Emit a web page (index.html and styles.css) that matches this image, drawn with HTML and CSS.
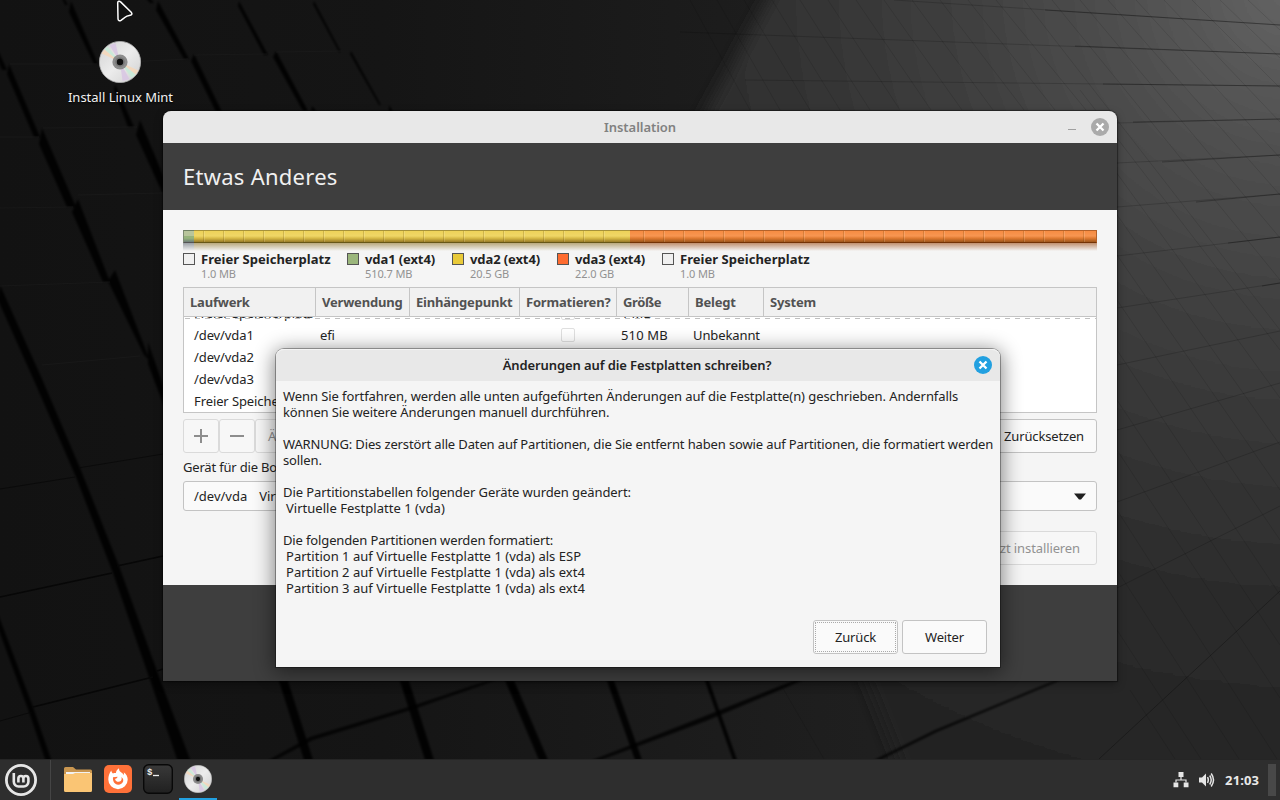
FILE: index.html
```html
<!DOCTYPE html>
<html lang="de">
<head>
<meta charset="utf-8">
<title>Installation</title>
<link rel="stylesheet" href="styles.css">
</head>
<body>
<svg class="defs" width="0" height="0" aria-hidden="true">
  <defs>
    <linearGradient id="discBase" x1="0" y1="0" x2="1" y2="1">
      <stop offset="0" stop-color="#d2d2d2"/><stop offset=".5" stop-color="#ececec"/><stop offset="1" stop-color="#cfcfcf"/>
    </linearGradient>
    <symbol id="disc" viewBox="0 0 42 42">
      <circle cx="21" cy="21" r="20.6" fill="url(#discBase)" stroke="#b5b5b5" stroke-width=".8"/>
      <g opacity=".85">
        <path d="M21 21 2.600 12.500 5.500 8.500z" fill="#f6d8ba"/>
        <path d="M21 21 5.500 8.500 8.500 5.600z" fill="#c8ecd8"/>
        <path d="M21 21 10.500 4.300 16.500 2z" fill="#d9c6e4"/>
        <path d="M21 21 39.400 29.500 36.500 33.500z" fill="#f6d8ba"/>
        <path d="M21 21 36.500 33.500 32.500 37z" fill="#c8ecd8"/>
        <path d="M21 21 30.500 38.300 23.500 40z" fill="#d9c6e4"/>
      </g>
      <circle cx="21" cy="21" r="7.600" fill="#8c8c8c"/>
      <circle cx="21" cy="21" r="4.800" fill="#777"/>
      <circle cx="21" cy="21" r="3.200" fill="#111"/>
    </symbol>
    <symbol id="close" viewBox="0 0 18 18">
      <circle cx="9" cy="9" r="9" fill="currentColor"/>
      <path d="M5.500 5.500l7 7M12.500 5.500l-7 7" stroke="#fff" stroke-width="2.300"/>
    </symbol>
  </defs>
</svg>

<main class="desktop">
  <svg class="wallpaper" viewBox="0 0 1280 800" aria-hidden="true">
    <defs>
      <linearGradient id="base" x1="0" y1="0" x2="1" y2="0">
        <stop offset="0" stop-color="#121212"/><stop offset=".3" stop-color="#151515"/><stop offset=".6" stop-color="#1d1d1d"/><stop offset="1" stop-color="#272727"/>
      </linearGradient>
      <radialGradient id="light" gradientUnits="userSpaceOnUse" cx="1290" cy="-10" r="860">
        <stop offset="0" stop-color="#646464"/><stop offset=".15" stop-color="#535353"/><stop offset=".4" stop-color="#3e3e3e"/><stop offset=".7" stop-color="#2c2c2c"/><stop offset="1" stop-color="#222"/>
      </radialGradient>
      <filter id="soft" x="-10%" y="-10%" width="120%" height="120%"><feGaussianBlur stdDeviation="8"/></filter>
      <filter id="edge"><feGaussianBlur stdDeviation=".9"/></filter>
    </defs>
    <rect width="1280" height="800" fill="url(#base)"/>
    <path d="M790-40H1340V840H930L850 640 640 230z" fill="url(#light)" filter="url(#soft)"/>
    <g fill="none" stroke="#000" stroke-opacity=".17">
      <path d="M894 0 1280 25M680 32l600 22M745 80l535 6M1117 123l163-4M1117 163l163-8M1117 207l163-13M1117 256l163-19M1117 308l163-25M1117 365l163-34M1117 430l163-47M1117 502l163-60M1117 588l163-82"/>
      <path d="M1099 759 1280 591" stroke-opacity=".28"/>
      <path stroke-opacity=".11" d="M690 0l60 110M717 0l63 110M744 0l66 110M772 0l68 110M800 0l70 110M828 0l72 110M856 0l75 110M884 0l78 110M912 0l81 110M940 0l84 110M968 0l87 110M996 0l90 110M1024 0 1280 330M1052 0l228 280M1080 0l200 238M1108 0l172 195M1136 0l144 158M1164 0l116 122M1192 0l88 88M1220 0l60 58M1248 0l32 30M1080 90l200 260M1100 150l180 248M1110 205l170 240M1117 255l163 235M1117 300l163 240M1117 350l163 245M1117 400l163 245M1117 450l163 248M1117 510l160 249M1117 570l122 189M1117 630l84 129M1130 690l45 69M781 685l43 74"/>
      <path stroke-opacity=".28" d="M1045 10l235 15M1075 46l205 8M1103 84l177 2M1133 122l147-3M1162 162l118-7M1196 202l84-8M1228 243l52-6M1262 286l18-3"/>
    </g>
    <g fill="#060606" fill-opacity=".9" filter="url(#edge)">
      <path d="M-2 50 7 70 2 70-2 60zM9 64 40 137H34L7 74zM42 128 76 207H67L39 144zM78 199 110 282H103L72 212zM115 270l35 91-6-6-36-74zM148 342l16 46v18l-16-42z"/>
      <path d="M71 1 98 64H94L69 12zM115 84l19 43h-6l-14-37zM140 120l30 72h-8l-26-57z"/>
      <path d="M64-2l4 7h-3l-3-7zM158 1l31 58h-5L156 10zM194 54l28 58h-6L191 61zM150-2l4 5h-4l-4-5z"/>
      <path d="M239 1l29 54h-4L238 6zM276 51l32 60h-5L273 57zM314 1l27 51h-2L313 4zM351 51l30 54h-2L350 54zM389 105l4 7h-4zM312 106l5 6h-6z"/>
      <path d="M0 285 42 379 80 468 119 566 157 671 191 762H178L149 677 113 573 76 477 36 385-2 300zM-2 614 33 707 52 762H46L29 712-2 628z"/>
      <path d="M278 678h9l26 82h-9zM399 678h9l26 82h-9zM504 678h9l35 82h-9zM606 678h7l29 82h-7zM704 678h4l29 82h-4z"/>
      <path d="M267 761 310 737 412 706 496 678 502 678 414 709 313 740 273 761zM590 761 700 718 800 678 808 678 706 721 598 761zM874 760 935 730 1056 680 1061 680 937 732 880 760z" fill-opacity=".8"/>
    </g>
    <g fill="none" stroke="#070707">
      <path d="M0 489 75 477M78 468l85-14M0 721l32-9" stroke-opacity=".7"/>
      <path d="M0 597 112 573M117 566l46-10M33 707l120-30M157 671l6-2" stroke-width="1.700"/>
      <path stroke="#1d1d1d" stroke-opacity=".55" d="M10 64h87M43 128l94-1M0 137h39M0 208l73-1M78 195l85-2M125 62l63-3M194 55l73-1M276 52l66-1M0 286l110-4M42 365l98-9"/>
    </g>
  </svg>

  <div class="shortcut">
    <svg width="42" height="42"><use href="#disc"/></svg>
    <span>Install Linux Mint</span>
  </div>

  <section class="window">
    <header class="titlebar">
      <span class="caption">Installation</span>
      <span class="controls"><i class="minimize"></i><svg class="close-muted" width="18" height="18"><use href="#close"/></svg></span>
    </header>
    <h1 class="heading">Etwas Anderes</h1>
    <div class="content">
      <div class="diskbar">
        <div class="segments"><i class="seg green"></i><i class="seg yellow"></i><i class="seg orange"></i></div>
        <div class="mirror"><i class="m-green"></i><i class="m-yellow"></i><i class="m-orange"></i></div>
      </div>
      <ul class="legend">
        <li class="wide"><i class="swatch"></i><div><b>Freier Speicherplatz</b><small>1.0 MB</small></div></li>
        <li><i class="swatch s-green"></i><div><b>vda1 (ext4)</b><small>510.7 MB</small></div></li>
        <li><i class="swatch s-yellow"></i><div><b>vda2 (ext4)</b><small>20.5 GB</small></div></li>
        <li><i class="swatch s-orange"></i><div><b>vda3 (ext4)</b><small>22.0 GB</small></div></li>
        <li class="wide"><i class="swatch"></i><div><b>Freier Speicherplatz</b><small>1.0 MB</small></div></li>
      </ul>

      <div class="table">
        <div class="row head"><span>Laufwerk</span><span>Verwendung</span><span>Einhängepunkt</span><span>Formatieren?</span><span class="size">Größe</span><span>Belegt</span><span>System</span></div>
        <div class="rows">
          <div class="row first"><span>Freier Speicherplatz</span><span></span><span></span><span class="check"><i></i></span><span>1 MB</span><span></span><span></span></div>
          <div class="row"><span>/dev/vda1</span><span>efi</span><span></span><span class="check"><i></i></span><span class="mb">510 MB</span><span>Unbekannt</span><span></span></div>
          <div class="row"><span>/dev/vda2</span></div>
          <div class="row"><span>/dev/vda3</span></div>
          <div class="row"><span>Freier Speicherplatz</span></div>
        </div>
      </div>

      <div class="toolbar">
        <div class="group">
          <button class="btn disabled icon"><svg width="16" height="16"><path d="M1 8h14M8 1v14" stroke="#8d8d8d" stroke-width="2"/></svg></button>
          <button class="btn disabled icon"><svg width="16" height="16"><path d="M1 8h14" stroke="#8d8d8d" stroke-width="2"/></svg></button>
          <button class="btn disabled">Ändern …</button>
        </div>
        <button class="btn reset">Zurücksetzen</button>
      </div>
      <p class="label">Gerät für die Bootloader-Installation:</p>
      <div class="combo"><span>/dev/vda</span><span>Virtuelle Festplatte 1 (vda)</span><svg width="12" height="7"><path d="M0 .5h12L7 6.500H5z" fill="#1f1f1f"/></svg></div>
      <div class="actions"><button class="btn disabled">Jetzt installieren</button></div>
    </div>
  </section>

  <section class="dialog">
    <header class="titlebar">
      <span class="caption">Änderungen auf die Festplatten schreiben?</span>
      <span class="controls"><svg class="close-active" width="18" height="18"><use href="#close"/></svg></span>
    </header>
    <div class="message">
      <p class="t-a">Wenn Sie fortfahren, werden alle unten aufgeführten Änderungen auf die Festplatte(n) geschrieben. Andernfalls</p>
      <p class="t-b">können Sie weitere Änderungen manuell durchführen.</p>
      <p class="t-b gap">WARNUNG: Dies zerstört alle Daten auf Partitionen, die Sie entfernt haben sowie auf Partitionen, die formatiert werden</p>
      <p class="t-b">sollen.</p>
      <p class="t-a gap">Die Partitionstabellen folgender Geräte wurden geändert:</p>
      <p class="item">Virtuelle Festplatte 1 (vda)</p>
      <p class="t-b gap">Die folgenden Partitionen werden formatiert:</p>
      <p class="item">Partition 1 auf Virtuelle Festplatte 1 (vda) als ESP</p>
      <p class="item">Partition 2 auf Virtuelle Festplatte 1 (vda) als ext4</p>
      <p class="item">Partition 3 auf Virtuelle Festplatte 1 (vda) als ext4</p>
    </div>
    <footer class="choices"><button class="btn focused">Zurück</button><button class="btn">Weiter</button></footer>
  </section>

  <svg class="pointer" width="20" height="24"><path d="M2.700 2.800C2.700 1 4.600.7 5.600 1.900L16.200 12.200c1.400 1.700.6 2.800-1 3-2.300.3-4.300 1.200-5.900 2.600L6 20.300c-1.500 1-3 .4-3-1.500z" fill="#111" stroke="#fff" stroke-width="1.500"/></svg>
</main>

<nav class="panel">
  <div class="launchers">
    <span class="menu"><svg width="32" height="32" fill="none" stroke="#e6e6e6">
      <circle cx="16" cy="16" r="14.600" stroke-width="2.800"/>
      <path d="M8.800 9v8.800a4.700 4.700 0 0 0 4.700 4.700h5.200a4.700 4.700 0 0 0 4.700-4.700v-3.300a2.500 2.500 0 0 0-5 0V18.500M18.400 14.500a2.500 2.500 0 0 0-5 0V18.500" stroke-width="2.600"/>
    </svg></span>
    <span class="app"><svg width="28" height="26">
      <path d="M0 2.500Q0 1 1.500 1H9l3 2.500h14.500Q28 3.500 28 5v7H0z" fill="#c99650"/>
      <path d="M2 6h24v5H2z" fill="#f2f2f2"/>
      <path d="M0 8h9l2-1h17v17.500q0 1.500-1.500 1.500h-25Q0 26 0 24.500z" fill="#fac574"/>
    </svg></span>
    <span class="app"><svg width="28" height="28">
      <rect width="28" height="28" rx="5" fill="#ff7139"/>
      <path d="M4.300 14.500C4.300 11 5.300 8 7.300 5.500 7.500 7 8.100 7.800 9 8.500c1-.5 1.900-.6 2.900-.5C12.100 6 13.200 4.300 15 3.200c-.1 2.600 1.200 3.500 3 4.800 1 .7 1.500 1.400 1.900 2.200.2-1 .1-1.900-.2-2.900 2.700 1.700 4 4.400 4 7.200a9.700 9.700 0 0 1-19.400 0z" fill="#fff"/>
      <path d="M9 12.300l4.600-.6c-.2 1.200-1.200 1.800-2.500 2.200.2 1.900 1.900 3.100 3.700 2.900 2.500-.3 3.600-2.700 2.400-4.800 1.900 1 2.400 2.800 1.900 4.500-.7 2-2.600 3.300-5 3.200-3.500-.1-5.600-3.500-5.100-7.400z" fill="#ff7139"/>
    </svg></span>
    <span class="app"><svg width="30" height="30">
      <defs><linearGradient id="term" x2="0" y2="1"><stop stop-color="#393939"/><stop offset="1" stop-color="#202020"/></linearGradient></defs>
      <rect x=".7" y=".7" width="28.600" height="28.600" rx="5" fill="url(#term)" stroke="#080808" stroke-width="1.400"/>
      <text x="4" y="11" class="prompt">$</text><path d="M10 11.500h6" stroke="#eee" stroke-width="1.300"/>
    </svg></span>
    <span class="app running"><svg width="28" height="28"><use href="#disc"/></svg></span>
  </div>
  <div class="tray">
    <svg width="16" height="16" fill="#e6e6e6"><path d="M5.500 0h5v5h-5zM.5 10.500h4.800v4.800H.5zM10.700 10.500h4.800v4.800h-4.800z"/><path d="M8 5v3M3 10.500V8h10v2.500" fill="none" stroke="#e6e6e6" stroke-width="1.200"/></svg>
    <svg width="16" height="16" fill="none" stroke="#e6e6e6" stroke-width="1.500"><path d="M0 5.500h3l4-4v13l-4-4H0z" fill="#e6e6e6" stroke="none"/><path d="M8.500 5.200q1.600 2.800 0 5.600M10.700 3.500q3 4.500 0 9M12.200 1.500q4.600 6.500 0 13"/></svg>
    <time>21:03</time>
    <i class="show-desktop"></i>
  </div>
</nav>
</body>
</html>
```
FILE: styles.css
```css
* { box-sizing: border-box; }

body {
  margin: 0;
  width: 1280px;
  height: 800px;
  overflow: hidden;
  display: flex;
  flex-direction: column;
  background: #141414;
  color: #232323;
  font: 13px/16px "Noto Sans", "Open Sans", sans-serif;
  letter-spacing: -0.1px;
}

h1, p, ul { margin: 0; padding: 0; }
i { display: block; }
svg { display: block; flex: none; }
.defs { position: absolute; }

.desktop {
  position: relative;
  height: 759px;
  overflow: hidden;
}

.wallpaper { width: 1280px; height: 800px; }

.shortcut {
  position: absolute;
  left: 60px;
  top: 41px;
  width: 120px;
  display: flex;
  flex-direction: column;
  align-items: center;
  gap: 6px;
  color: #f2f2f2;
  letter-spacing: 0;
  text-shadow: 0 1px 2px #000;
}

.shortcut span { padding-left: 1px; }

.pointer { position: absolute; left: 115px; top: 0; }

/* Windows */
.window {
  position: absolute;
  left: 163px;
  top: 111px;
  width: 954px;
  height: 570px;
  display: flex;
  flex-direction: column;
  background: #3e3e3e;
  border-radius: 8px 8px 0 0;
  overflow: hidden;
  box-shadow: 0 0 1px 1px rgba(0, 0, 0, .4), 0 3px 8px rgba(0, 0, 0, .35);
}

.titlebar {
  flex: none;
  height: 32px;
  display: grid;
  grid-template-columns: 1fr auto 1fr;
  align-items: center;
  background: #e8e8e8;
  font-weight: 600;
}

.caption { grid-column: 2; }
.window .caption { color: #818181; letter-spacing: -0.05px; }
.dialog .caption { margin-left: -2px; }

.controls {
  display: flex;
  justify-content: flex-end;
  align-items: center;
  gap: 15px;
  padding-right: 8px;
}

.minimize { width: 8px; height: 1px; margin-top: 5px; background: #a0a0a0; }
.close-muted { color: #aaa; }
.close-active { color: #22a0e0; }

.heading {
  flex: none;
  height: 67px;
  padding-left: 20px;
  color: #f0f0f0;
  font-size: 22px;
  font-weight: 400;
  line-height: 67px;
  letter-spacing: .26px;
}

.content {
  height: 375px;
  padding: 20px;
  display: flex;
  flex-direction: column;
  background: #f5f5f5;
}

/* Disk usage */
.diskbar { flex: none; height: 22px; }
.segments, .mirror { display: flex; }
.segments { height: 13px; }

.seg {
  border: solid;
  border-width: 1px 0;
  background-image:
    repeating-linear-gradient(90deg, transparent 0 18px, rgba(90, 60, 0, .2) 18px 19px, rgba(255, 255, 255, .14) 19px 20px),
    linear-gradient(rgba(255, 255, 255, .05), rgba(255, 255, 255, .13) 45%, rgba(70, 40, 0, .12) 65%, rgba(70, 40, 0, .5));
}

.green, .m-green { width: 11px; }
.green {
  border-color: #6e8064 #6e8064 #555;
  border-left: 1px solid #7e8b74;
  background: linear-gradient(#b8c59c 0 45%, #96b47c 45% 65%, #6e7d78);
}
.yellow, .m-yellow { width: 436px; }
.yellow { background-color: #edd050; border-color: #a6923a #a6923a #675717; background-position: -9px 0, 0 0; }
.orange, .m-orange { flex: 1; }
.orange { background-color: #f68638; border-color: #b4622a #b4622a #743305; background-position: -5px 0, 0 0; border-right: 1px solid #b4622a; }

.mirror { height: 8px; }
.mirror i { height: 8px; }
.m-green { background: linear-gradient(rgba(80, 90, 100, .55), transparent); }
.m-yellow { background: linear-gradient(rgba(135, 105, 25, .55), transparent); }
.m-orange { background: linear-gradient(rgba(155, 75, 20, .6), transparent); }

.legend { flex: none; display: flex; height: 35px; list-style: none; }
.legend li { width: 105px; display: flex; gap: 6px; }
.legend li.wide { width: 164px; }
.legend b, .legend small { display: block; line-height: 15px; white-space: nowrap; }
.legend .wide b { letter-spacing: .03px; }
.legend small { color: #929292; font-size: 11px; line-height: 14px; }

.swatch { width: 12px; height: 12px; margin-top: 1px; border: 1px solid #555; background: #f0f0f0; }
.s-green { background: #9bb67c; }
.s-yellow { background: #e9ca39; }
.s-orange { background: #ff6c30; }

/* Partition table */
.table {
  flex: none;
  height: 126px;
  border: 1px solid #c5c5c5;
  background: #fff;
  overflow: hidden;
}

.row {
  display: grid;
  grid-template-columns: 132px 94px 110px 97px 72px 75px 1fr;
  height: 22px;
  line-height: 22px;
  white-space: nowrap;
}

.row span { padding-left: 4px; }
.row span:first-child { padding-left: 10px; }

.row.head {
  height: 29px;
  background: #f1f1f1;
  border-bottom: 1px solid #c5c5c5;
  color: #525252;
  font-weight: 700;
  line-height: 28px;
  letter-spacing: -0.2px;
}

.row.head span, .row.head span:first-child { padding-left: 6px; border-right: 1px solid #c5c5c5; }
.row.head span:last-child { border-right: 0; }
.row.head .size { letter-spacing: -0.4px; }

.rows { height: 95px; overflow: hidden; }
.row.first { margin-top: -15px; position: relative; }
.row.first::after {
  content: "";
  position: absolute;
  left: 1px;
  right: 0;
  top: 16px;
  height: 1px;
  background: repeating-linear-gradient(90deg, #c0c0c0 0 5px, transparent 5px 10px);
}

.row .check { display: flex; justify-content: center; align-items: center; padding: 0 1px 0 0; }
.check i { width: 14px; height: 14px; margin-left: -1px; border: 1px solid #e0e0e0; border-radius: 2px; }
.mb { letter-spacing: .17px; }

/* Controls */
.btn {
  height: 34px;
  padding: 0 12px;
  border: 1px solid #c3c3c3;
  border-radius: 3px;
  background: #fafafa;
  color: #232323;
  font: inherit;
  letter-spacing: -0.15px;
  white-space: nowrap;
}

.btn.disabled { border-color: #dadada; background: #f7f7f7; color: #929292; }
.btn.icon { width: 36px; padding: 0; display: flex; justify-content: center; align-items: center; }

.toolbar { flex: none; display: flex; justify-content: space-between; margin-top: 6px; }
.group { display: flex; }

.label { margin: 6px 0 5px; line-height: 16px; letter-spacing: -0.18px; }

.combo {
  flex: none;
  height: 30px;
  margin-top: 1px;
  padding: 0 10px;
  display: flex;
  align-items: center;
  gap: 12px;
  border: 1px solid #c3c3c3;
  border-radius: 3px;
  background: #fafafa;
}
.combo svg { margin-left: auto; }
.combo span:first-child { letter-spacing: 0; }

.actions { display: flex; justify-content: flex-end; margin-top: 20px; }
.actions .btn { padding: 0 16px; letter-spacing: -0.11px; }

/* Confirmation dialog */
.dialog {
  position: absolute;
  left: 276px;
  top: 349px;
  width: 724px;
  height: 318px;
  display: flex;
  flex-direction: column;
  background: #f5f5f5;
  border-radius: 8px 8px 0 0;
  box-shadow: 0 0 0 1px rgba(0, 0, 0, .32), 0 3px 20px 2px rgba(0, 0, 0, .48);
}
.dialog .titlebar { border-radius: 8px 8px 0 0; box-shadow: inset 0 1px #f4f4f4; }

.message { flex: 1; padding: 7px 7px 0; white-space: nowrap; }
.gap { margin-top: 16px; }
.t-a { letter-spacing: -0.081px; }
.t-b { letter-spacing: -0.135px; }
.t-b:not(.gap), .t-a + .t-b { letter-spacing: -0.12px; }
.item { padding-left: 3px; letter-spacing: .02px; }

.choices { display: flex; justify-content: flex-end; gap: 4px; padding: 0 13px 13px; }
.choices .btn { width: 85px; }
.focused { outline: 1px dotted #aaa; outline-offset: -3px; }

/* Taskbar */
.panel {
  height: 41px;
  display: flex;
  justify-content: space-between;
  background: #2e2e2e;
  border-top: 1px solid #252525;
}

.launchers { display: flex; }
.menu { width: 51px; padding: 4px 0 0 5px; border-right: 1px solid #454545; }
.app { width: 40px; display: flex; justify-content: center; align-items: center; }
.menu + .app { margin-left: 7px; }
.app svg { margin-bottom: 2px; }
.running { width: 38px; margin-left: 1px; border-bottom: 2px solid #22a0e0; }
.running svg { margin-bottom: 0; }
.prompt { fill: #eee; font: 700 9px "Liberation Mono", monospace; }

.tray { display: flex; align-items: center; gap: 10px; padding-right: 4px; color: #e8e8e8; }
.tray time { font-weight: 700; letter-spacing: .1px; }
.show-desktop { width: 8px; height: 32px; margin-left: -1px; background: #484848; }
```
